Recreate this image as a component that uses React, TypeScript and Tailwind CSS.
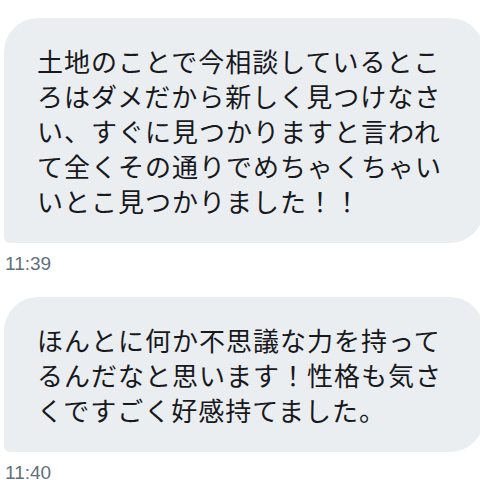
// Chat thread: two received messages with their timestamps
const messages = [
  {
    lines: [
      "土地のことで今相談しているとこ",
      "ろはダメだから新しく見つけなさ",
      "い、すぐに見つかりますと言われ",
      "て全くその通りでめちゃくちゃい",
      "いとこ見つかりました！！",
    ],
    time: "11:39",
  },
  {
    lines: [
      "ほんとに何か不思議な力を持って",
      "るんだなと思います！性格も気さ",
      "くですごく好感持てました。",
    ],
    time: "11:40",
  },
];

export default function App() {
  return (
    <div className="w-[480px] h-[480px] overflow-hidden bg-white">
      <div className="pl-1 pt-[18px] flex flex-col gap-[23px]">
        {messages.map((m, i) => (
          <div key={i} className="flex flex-col">
            <div
              className="w-[480px] rounded-[34px] rounded-bl-[6px] bg-[#ebeef1] pl-[33px] py-[25px] text-[26px] leading-[35px] tracking-[1px] text-[#17191c] whitespace-nowrap"
              style={{ fontFamily: '"Noto Sans CJK JP", "Noto Sans", sans-serif' }}
            >
              {m.lines.map((l, j) => (
                <div key={j}>{l}</div>
              ))}
            </div>
            <div
              className="mt-[10px] pl-[1px] text-[19px] leading-[21px] text-[#5f6f7c]"
              style={{ fontFamily: '"Liberation Sans", Arial, sans-serif' }}
            >
              {m.time}
            </div>
          </div>
        ))}
      </div>
    </div>
  );
}
